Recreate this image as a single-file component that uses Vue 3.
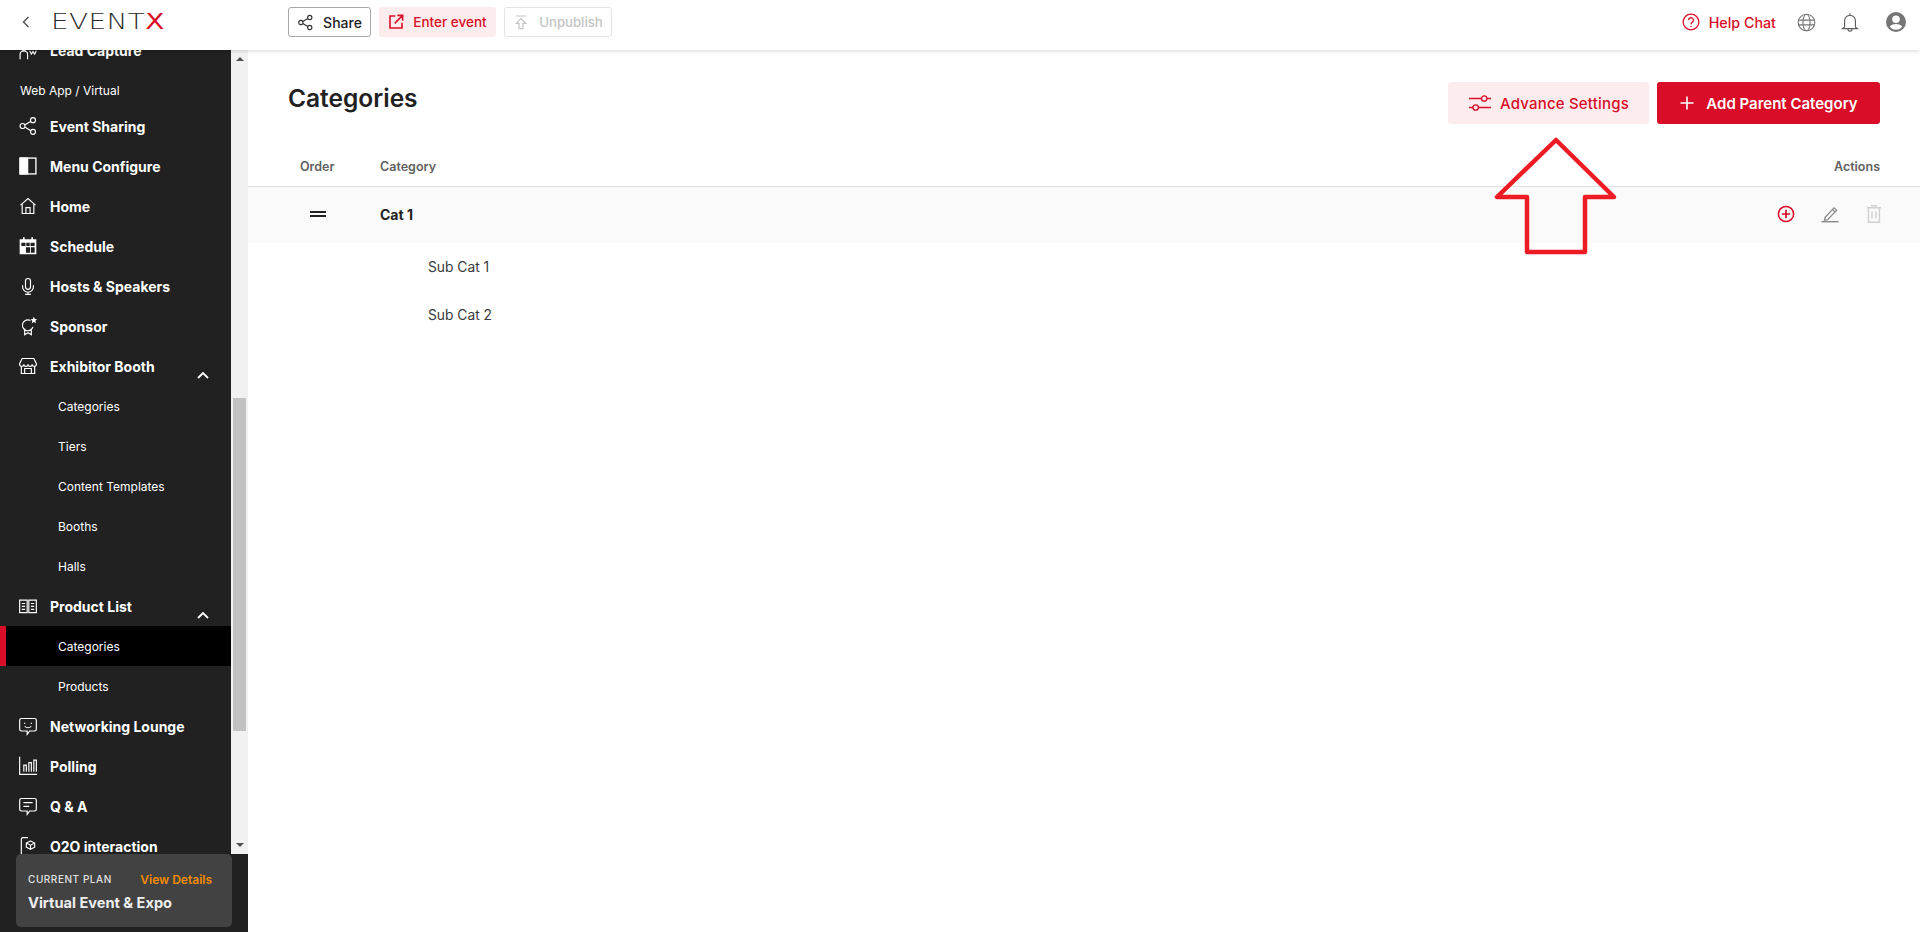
<script setup>
import { onMounted, ref } from 'vue'

const icons = {
  lead: 'M7 9m-3.500 0a3.500 3.500 0 1 0 7 0 3.500 3.500 0 1 0-7 0M2.500 23v-6a3.500 3.500 0 0 1 3.500-3.500h2a3.500 3.500 0 0 1 3.500 3.500v6M14 13l2 4 2-3 2 3 2-4',
  share: 'M2.500 12a3 3 0 1 0 6 0 3 3 0 1 0-6 0M15 5a3 3 0 1 0 6 0 3 3 0 1 0-6 0M15 19a3 3 0 1 0 6 0 3 3 0 1 0-6 0M8.200 10.700l7.100-4.300M8.200 13.300l7.100 4.300',
  home: 'M3 11 12 3l9 8M5 9.500V21h14V9.500M9.500 21v-7h5v7M5 21h14',
  mic: 'M9 6a3 3 0 0 1 6 0v7a3 3 0 0 1-6 0zM5.500 11v2a6.500 6.500 0 0 0 13 0v-2M12 19.500V22M8.500 22h7',
  sponsor: 'M15 5.500A6.500 6.500 0 1 0 18 13M8 15v7.500l4-2.500 4 2.500V15',
  store: 'M5 3h14l3 6v1a2.500 2.500 0 0 1-5 0 2.500 2.500 0 0 1-5 0 2.500 2.500 0 0 1-5 0 2.500 2.500 0 0 1-5 0V9zM4 12.500V21h16v-8.500M8 21v-6h8v6',
  book: 'M2 5h9v15H2zM13 5h9v15h-9zM4.500 9h4M4.500 12.500h4M4.500 16h4M15.500 9h4M15.500 12.500h4M15.500 16h4',
  lounge: 'M4 3h16a2 2 0 0 1 2 2v11a2 2 0 0 1-2 2h-6l-3 4v-4H4a2 2 0 0 1-2-2V5a2 2 0 0 1 2-2zM8 8v1.500M16 8v1.500M8 12.500c2.500 2 5.500 2 8 0',
  poll: 'M2 1v21h21M7 19v-8h3v8M13 19V8h3v11M19 19V5h3v14',
  qa: 'M4 3h16a2 2 0 0 1 2 2v11a2 2 0 0 1-2 2h-6l-3 4v-4H4a2 2 0 0 1-2-2V5a2 2 0 0 1 2-2zM6.500 8h11M6.500 12.500h7',
  o2o: 'M12 2H6a2 2 0 0 0-2 2v17a2 2 0 0 0 2 2h8M15 6l5 2.500v5L15 16l-5-2.500v-5zM10 8.500l5 2.500 5-2.500M15 11v5'
}

const nav = [
  { type: 'main', label: 'Lead Capture', icon: 'lead' },
  { type: 'group', label: 'Web App / Virtual' },
  { type: 'main', label: 'Event Sharing', icon: 'share' },
  { type: 'main', label: 'Menu Configure', custom: 'menu' },
  { type: 'main', label: 'Home', icon: 'home' },
  { type: 'main', label: 'Schedule', custom: 'calendar' },
  { type: 'main', label: 'Hosts & Speakers', icon: 'mic' },
  { type: 'main', label: 'Sponsor', icon: 'sponsor', star: true },
  { type: 'main', label: 'Exhibitor Booth', icon: 'store', open: true },
  { type: 'sub', label: 'Categories' },
  { type: 'sub', label: 'Tiers' },
  { type: 'sub', label: 'Content Templates' },
  { type: 'sub', label: 'Booths' },
  { type: 'sub', label: 'Halls' },
  { type: 'main', label: 'Product List', icon: 'book', open: true },
  { type: 'sub', label: 'Categories', active: true },
  { type: 'sub', label: 'Products' },
  { type: 'main', label: 'Networking Lounge', icon: 'lounge' },
  { type: 'main', label: 'Polling', icon: 'poll' },
  { type: 'main', label: 'Q & A', icon: 'qa' },
  { type: 'main', label: 'O2O interaction', icon: 'o2o' }
]

const scroller = ref(null)
onMounted(() => {
  scroller.value.scrollTop = 20
})
</script>

<template>
  <div class="app">
    <header class="topbar">
      <svg class="back" viewBox="0 0 10 14" width="10" height="14"><path d="M7.500 2 2.500 7l5 5" fill="none" stroke="#555" stroke-width="1.500" /></svg>
      <div class="logo-box"><div class="logo">EVENT<span>X</span></div></div>
      <div class="top-actions">
        <button class="tbtn share">
          <svg viewBox="0 0 24 24" width="17" height="17" fill="none" stroke="#333" stroke-width="1.600"><path :d="icons.share" /></svg>
          Share
        </button>
        <button class="tbtn enter">
          <svg viewBox="0 0 24 24" width="16" height="16" fill="none" stroke="#d90d27" stroke-width="2.400"><path d="M11 3H3v18h18v-8M14 2h8v8M22 2 10 14" /></svg>
          Enter event
        </button>
        <button class="tbtn unpublish">
          <svg viewBox="0 0 24 24" width="16" height="16" fill="none" stroke="#c4c4c4" stroke-width="1.800"><path d="M4 3h16M12 7l-7 7h4v8h6v-8h4z" /></svg>
          Unpublish
        </button>
      </div>
      <div class="top-right">
        <div class="help">
          <svg viewBox="0 0 24 24" width="18" height="18" fill="none" stroke="#d90d27" stroke-width="1.700"><circle cx="12" cy="12" r="10.500" /><path d="M8.800 9.500a3.200 3.200 0 1 1 5 2.700c-1.200.8-1.800 1.400-1.800 2.800M12 17.200v1.600" /></svg>
          Help Chat
        </div>
        <svg class="glob" viewBox="0 0 24 24" width="19" height="19" fill="none" stroke="#757575" stroke-width="1.400"><circle cx="12" cy="12" r="10.500" /><ellipse cx="12" cy="12" rx="4.500" ry="10.500" /><path d="M1.500 9h21M1.500 15h21" /></svg>
        <svg class="bell" viewBox="0 0 24 24" width="20" height="20" fill="none" stroke="#616161" stroke-width="1.400"><path d="M12 1.500v2M5.500 18v-7.500a6.500 6.500 0 0 1 13 0V18l2.500 2H3zM9.500 20.500a2.500 2.500 0 0 0 5 0" /></svg>
        <svg class="avatar" viewBox="0 0 24 24" width="24" height="24"><path fill="#757575" d="M12 2a10 10 0 1 0 0 20 10 10 0 0 0 0-20zm0 3.500a3.800 3.800 0 1 1 0 7.600 3.800 3.800 0 0 1 0-7.600zm0 14.300c-2.700 0-5-1.300-6.300-3.300 1.500-1.700 4-2.500 6.300-2.500s4.800.8 6.300 2.500c-1.300 2-3.600 3.300-6.300 3.300z" /></svg>
      </div>
    </header>

    <div class="body">
      <aside class="sidebar">
        <div class="scrollwrap">
          <nav ref="scroller" class="nav">
            <div v-for="item in nav" :key="item.label + item.type + item.active" class="row" :class="[item.type, { active: item.active }]">
              <template v-if="item.type === 'main'">
                <svg v-if="item.icon" class="nicon" viewBox="0 0 24 24" width="20" height="20" fill="none" stroke="#fff" stroke-width="1.400">
                  <path :d="icons[item.icon]" />
                  <path v-if="item.star" fill="#fff" stroke="none" d="m19 1 1.200 2.600 2.800.3-2.100 1.900.6 2.800-2.500-1.400-2.500 1.400.6-2.800L15 3.900l2.800-.3z" />
                </svg>
                <svg v-else-if="item.custom === 'menu'" class="nicon" viewBox="0 0 24 24" width="20" height="20" fill="none" stroke="#fff" stroke-width="1.600">
                  <rect x="2.500" y="2.500" width="19" height="19" />
                  <rect x="2.500" y="2.500" width="9" height="19" fill="#fff" />
                </svg>
                <svg v-else class="nicon" viewBox="0 0 24 24" width="20" height="20">
                  <path fill="#fff" d="M2 4h4V1.500h2V4h8V1.500h2V4h4v18H2zM4 8v4h5V8zm6 0v4h4V8zm5 0v4h5V8zM9.500 13.500V20h5v-6.500zm6 0V20H20v-6.500z" />
                </svg>
                <span class="mlabel">{{ item.label }}</span>
                <svg v-if="item.open" class="chev" viewBox="0 0 14 10" width="14" height="10"><path d="M2 8l5-5 5 5" fill="none" stroke="#fff" stroke-width="1.800" /></svg>
              </template>
              <template v-else>{{ item.label }}</template>
            </div>
          </nav>
          <div class="track">
            <span class="arrow up"></span>
            <span class="thumb"></span>
            <span class="arrow down"></span>
          </div>
        </div>
        <div class="plan-wrap">
          <div class="plan">
            <div class="plan-top">
              <span class="plan-cap">CURRENT PLAN</span>
              <span class="plan-link">View Details</span>
            </div>
            <div class="plan-name">Virtual Event &amp; Expo</div>
          </div>
        </div>
      </aside>

      <main class="main">
        <div class="head">
          <h1>Categories</h1>
          <div class="head-btns">
            <button class="btn soft">
              <svg viewBox="0 0 24 24" width="24" height="24" fill="none" stroke="#d90d27" stroke-width="1.300"><path d="M1 7.500h12.500M19 7.500h4M1 16.500h4M10.500 16.500H23" /><circle cx="16.200" cy="7.500" r="2.700" /><circle cx="7.700" cy="16.500" r="2.700" /></svg>
              Advance Settings
            </button>
            <button class="btn solid">
              <svg viewBox="0 0 16 16" width="16" height="16" fill="none" stroke="#fff" stroke-width="1.600"><path d="M8 1.500v13M1.500 8h13" /></svg>
              Add Parent Category
            </button>
          </div>
        </div>

        <div class="thead">
          <span class="c-order">Order</span>
          <span class="c-cat">Category</span>
          <span class="c-act">Actions</span>
        </div>
        <div class="parent">
          <span class="c-order drag"><i></i><i></i></span>
          <span class="c-cat pname">Cat 1</span>
          <span class="acts">
            <svg viewBox="0 0 20 20" width="20" height="20" fill="none" stroke="#d90d27"><circle cx="10" cy="10" r="7.600" stroke-width="1.500" /><path d="M10 5.800v8.400M5.800 10h8.400" stroke-width="1.700" /></svg>
            <svg viewBox="0 0 20 20" width="20" height="20" fill="none" stroke="#8a8a8a" stroke-width="1.200"><path d="M5 13.500 14 3.800l2.600 2.400-8.900 9.400-3.300.7zM12.400 5.500l2.600 2.400" /><path d="M1.500 17.700h17" stroke-width="1.400" /></svg>
            <svg viewBox="0 0 20 20" width="20" height="20" fill="none" stroke="#cfcfcf" stroke-width="1.400"><path d="M3 3.800h14M7 1.800h6M4.500 3.800v14.500h11V3.800M8 7.500v7M12 7.500v7" /></svg>
          </span>
        </div>
        <div class="child">Sub Cat 1</div>
        <div class="child">Sub Cat 2</div>

        <svg class="annot" viewBox="0 0 130 120" width="130" height="120">
          <path d="M66 3 7 60h30v55h58V60h29z" fill="none" stroke="#ed1c24" stroke-width="4.500" stroke-linejoin="round" />
        </svg>
      </main>
    </div>
  </div>
</template>

<style>
html, body { margin: 0; background: #fff; }
</style>

<style scoped>
.app {
  width: 1920px;
  height: 932px;
  overflow: hidden;
  display: flex;
  flex-direction: column;
  font-family: Inter, "Liberation Sans", sans-serif;
  color: #212121;
}
button { font-family: inherit; cursor: pointer; }

.topbar {
  height: 50px;
  flex: none;
  background: #fff;
  box-shadow: 0 1px 4px rgba(0,0,0,.16);
  display: flex;
  align-items: center;
  padding: 0 12px 6px 21px;
  box-sizing: border-box;
  position: relative;
  z-index: 2;
}
.back { flex: none; }
.logo-box { width: 237px; flex: none; margin-left: 20px; }
.logo {
  width: max-content;
  font-family: "DejaVu Sans", sans-serif;
  font-weight: 200;
  font-size: 22px;
  letter-spacing: .3px;
  color: #2a2a2a;
  line-height: 26px;
  transform: scaleX(1.27);
  transform-origin: left center;
}
.logo span { color: #d90d27; font-weight: 400; }
.top-actions { display: flex; gap: 8px; }
.tbtn {
  height: 30px;
  padding: 0;
  display: flex;
  align-items: center;
  justify-content: center;
  gap: 9px;
  border-radius: 3px;
  font-size: 13.500px;
  font-weight: 500;
  background: #fff;
  box-sizing: border-box;
}
.share { width: 83px; border: 1px solid #a8a8a8; color: #212121; font-size: 14px; }
.enter { width: 117px; border: 0; background: #fdecee; color: #d90d27; }
.unpublish { width: 108px; border: 1px solid #e4e4e4; color: #c4c4c4; font-size: 13.200px; gap: 10px; }

.top-right { margin-left: auto; display: flex; align-items: center; }
.help {
  display: flex;
  align-items: center;
  gap: 9px;
  font-size: 14.300px;
  font-weight: 500;
  color: #d90d27;
}
.glob { margin-left: 21px; }
.bell { margin-left: 24px; }
.avatar { margin-left: 24px; }

.body { flex: 1; display: flex; min-height: 0; }

.sidebar {
  width: 248px;
  flex: none;
  background: #212121;
  display: flex;
  flex-direction: column;
}
.scrollwrap { height: 804px; display: flex; flex: none; }
.nav {
  width: 231px;
  flex: none;
  overflow: hidden;
  color: #fff;
}
.row {
  height: 40px;
  display: flex;
  align-items: center;
  box-sizing: border-box;
}
.row.main { padding-left: 18px; }
.group { padding-left: 20px; font-size: 12px; height: 36px; padding-top: 4px; }
.sub { padding-left: 58px; font-size: 12px; }
.sub.active {
  background: #000;
  border-left: 6px solid #d90d27;
  padding-left: 52px;
}
.nicon { flex: none; }
.mlabel { margin-left: 12px; font-size: 14px; font-weight: 700; letter-spacing: 0; }
.chev { margin-left: auto; margin-right: 21px; margin-top: 18px; flex: none; }

.track {
  width: 17px;
  flex: none;
  background: #f1f1f1;
  position: relative;
}
.thumb {
  position: absolute;
  left: 2px;
  right: 2px;
  top: 348px;
  height: 333px;
  background: #c1c1c1;
}
.arrow {
  position: absolute;
  left: 4.500px;
  width: 0;
  height: 0;
  border-left: 4px solid transparent;
  border-right: 4px solid transparent;
}
.arrow.up { top: 7px; border-bottom: 4px solid #505050; }
.arrow.down { bottom: 7px; border-top: 4px solid #505050; }

.plan-wrap { padding-left: 16px; }
.plan {
  width: 216px;
  height: 73px;
  box-sizing: border-box;
  padding: 18px 20px 0 12px;
  background: #424242;
  border-radius: 5px;
}
.plan-top { display: flex; justify-content: space-between; align-items: center; height: 14px; }
.plan-cap { font-size: 10px; font-weight: 500; letter-spacing: .55px; color: #e0e0e0; }
.plan-link { font-size: 12px; font-weight: 600; color: #f08c00; }
.plan-name { margin-top: 8px; font-size: 14.600px; font-weight: 700; color: #ededed; }

.main { flex: 1; position: relative; min-width: 0; }
.head {
  display: flex;
  justify-content: space-between;
  padding: 32px 40px 0;
  height: 98px;
  box-sizing: border-box;
}
h1 { margin: 0; font-size: 24.500px; font-weight: 600; line-height: 32px; color: #212121; }
.head-btns { display: flex; gap: 8px; height: 42px; }
.btn {
  height: 42px;
  border: 0;
  border-radius: 3px;
  display: flex;
  align-items: center;
  justify-content: center;
  font-size: 15px;
  font-weight: 600;
  padding: 0;
}
.soft { width: 201px; gap: 8px; background: #fdecee; color: #d90d27; font-weight: 500; font-size: 15px; letter-spacing: .2px; }
.solid { width: 223px; gap: 11px; background: #d90d27; color: #fff; }

.thead {
  height: 38px;
  padding: 0 40px 2px 52px;
  box-sizing: content-box;
  height: 36px;
  border-bottom: 1px solid #e0e0e0;
  display: flex;
  align-items: center;
  font-size: 12.500px;
  font-weight: 600;
  color: #616161;
}
.c-order { width: 80px; flex: none; }
.c-act { margin-left: auto; }
.parent {
  height: 56px;
  background: #fafafa;
  display: flex;
  align-items: center;
  box-sizing: border-box;
  padding: 0 36px 2px 52px;
}
.drag { display: flex; flex-direction: column; gap: 2px; padding-left: 10px; box-sizing: border-box; }
.drag i { display: block; width: 16px; height: 2px; background: #212121; }
.pname { font-size: 14px; font-weight: 700; }
.acts { margin-left: auto; display: flex; gap: 24px; }
.child {
  height: 48px;
  display: flex;
  align-items: center;
  padding-left: 180px;
  font-size: 13.800px;
  color: #3a3a3a;
}
.annot { position: absolute; left: 1242px; top: 87px; }
</style>
